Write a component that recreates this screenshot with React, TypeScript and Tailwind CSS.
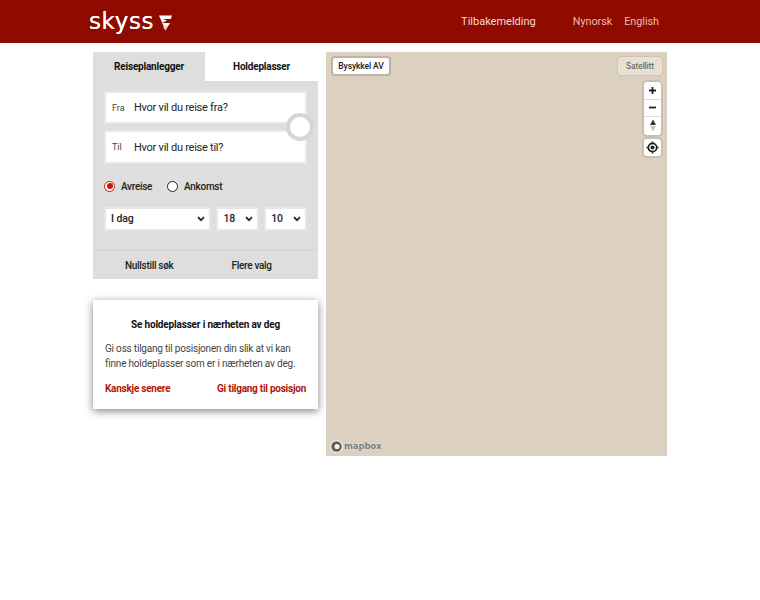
import React from "react";

function Chevron() {
  return (
    <svg width="8" height="6" viewBox="0 0 8 6" className="shrink-0">
      <path d="M1 1.2 L4 4.2 L7 1.2" fill="none" stroke="#222" strokeWidth="1.7" />
    </svg>
  );
}

function Select({ label, className }: { label: string; className: string }) {
  return (
    <div className={`flex h-[24px] items-center justify-between border-2 border-[#e6e6e6] bg-white pl-[5px] pr-[4px] text-[10.5px] font-medium tracking-[-0.1px] text-[#222] ${className}`}>
      <span>{label}</span>
      <Chevron />
    </div>
  );
}

function Field({ tag, text, className }: { tag: string; text: string; className: string }) {
  return (
    <div className={`flex items-center border-2 border-[#e8e8e8] bg-white pt-[2px] ${className}`}>
      <span className="w-[28px] pl-[6px] text-[9px] text-[#444]">{tag}</span>
      <span className="text-[11px] tracking-[-0.25px] text-[#222]">{text}</span>
    </div>
  );
}

export default function App() {
  return (
    <div className="min-h-[600px] bg-white font-['Roboto',sans-serif]">
      <header className="flex h-[43px] items-center bg-[#8f0b00] pl-[89px] pr-[101px]">
        <span className="font-['DejaVu_Sans',sans-serif] text-[23px] leading-none tracking-[0.6px] text-white [text-shadow:0_0_0.5px_#fff]">skyss</span>
        <svg width="13" height="16" viewBox="0 0 13 16" className="ml-[5px] mt-[3px]">
          <path d="M0 0.5 H13 L11.8 4 L4 4 L8 5.5 L3 8 L11 8 L6.5 15.5 Z" fill="#fff" />
          <path d="M4 12 L9 10.5 L6.5 15.5 Z" fill="#f0c9c4" />
        </svg>
        <span className="ml-auto mt-[1px] text-[11px] text-[#f6dcd8]">Tilbakemelding</span>
        <span className="ml-[37px] mt-[2px] text-[10.75px] text-[#eeb9b2]">Nynorsk</span>
        <span className="ml-[12px] mt-[2px] text-[10.75px] text-[#eeb9b2]">English</span>
      </header>

      <main className="ml-[93px] mt-[9px] flex w-[574px] items-start gap-[8px]">
        <div className="w-[225px] shrink-0">
          <div className="flex h-[29px] text-[10px] font-bold tracking-[-0.2px] text-[#111]">
            <div className="flex w-[112px] items-center justify-center bg-[#dedede]">Reiseplanlegger</div>
            <div className="flex flex-1 items-center justify-center bg-white">Holdeplasser</div>
          </div>
          <div className="bg-[#dedede]">
            <div className="relative flex flex-col gap-[6px] px-[11px] pt-[10px]">
              <Field tag="Fra" text="Hvor vil du reise fra?" className="h-[33px]" />
              <Field tag="Til" text="Hvor vil du reise til?" className="h-[34px]" />
              <div className="absolute left-[193px] top-[32px] flex h-[28px] w-[28px] items-center justify-center rounded-full bg-[#d6d6d6]">
                <div className="h-[20px] w-[20px] rounded-full bg-white" />
              </div>
            </div>
            <div className="flex h-[43px] items-center px-[11px] pt-[1px] text-[10px] font-medium tracking-[-0.3px] text-[#222]">
              <span className="flex h-[11px] w-[11px] items-center justify-center rounded-full border-[1.5px] border-[#b91c0c] bg-white">
                <span className="h-[6px] w-[6px] rounded-full bg-[#b91c0c]" />
              </span>
              <span className="ml-[6px]">Avreise</span>
              <span className="ml-[15px] h-[11px] w-[11px] rounded-full border-[1.5px] border-[#222] bg-white" />
              <span className="ml-[6px]">Ankomst</span>
            </div>
            <div className="flex gap-[5px] px-[11px]">
              <Select label="I dag" className="w-[108px]" />
              <Select label="18" className="w-[43px]" />
              <Select label="10" className="w-[43px]" />
            </div>
            <div className="mt-[18px] flex h-[30px] items-center border-t-2 border-[#d8d8d8] text-[10px] font-medium tracking-[-0.3px] text-[#222]">
              <span className="ml-[32px]">Nullstill søk</span>
              <span className="ml-[58px]">Flere valg</span>
            </div>
          </div>

          <div className="mt-[21px] h-[109px] bg-white px-[12px] pt-[18px] shadow-[0_2px_8px_rgba(0,0,0,0.5)]">
            <div className="text-center text-[10px] font-bold leading-[14px] tracking-[-0.17px] text-[#111]">Se holdeplasser i nærheten av deg</div>
            <p className="mt-[9px] text-[10px] leading-[15px] tracking-[-0.2px] text-[#444]">
              Gi oss tilgang til posisjonen din slik at vi kan finne holdeplasser som er i nærheten av deg.
            </p>
            <div className="mt-[11px] flex justify-between text-[10px] font-bold leading-[14px] tracking-[-0.25px] text-[#b01505]">
              <span>Kanskje senere</span>
              <span>Gi tilgang til posisjon</span>
            </div>
          </div>
        </div>

        <div className="relative h-[404px] flex-1 bg-[#dcd0c0]">
          <div className="absolute left-[7px] top-[6px] flex h-[16px] w-[56px] items-center justify-center rounded-[2px] bg-white text-[8.5px] font-medium tracking-[-0.1px] text-[#222] shadow-[0_0_0_2px_rgba(0,0,0,0.14)]">Bysykkel AV</div>
          <div className="absolute right-[5px] top-[5px] flex h-[18px] w-[44px] items-center justify-center rounded-[3px] bg-[#e8e0d4] text-[8.5px] tracking-[-0.1px] text-[#555] shadow-[0_0_0_1px_rgba(0,0,0,0.06)]">Satellitt</div>
          <div className="absolute right-[6px] top-[30px] flex w-[17px] flex-col divide-y divide-[#ddd] rounded-[3px] bg-white shadow-[0_0_0_2px_rgba(0,0,0,0.08)]">
            <div className="flex h-[17.5px] items-center justify-center">
              <svg width="9" height="9" viewBox="0 0 9 9"><path d="M4.5 1V8M1 4.5H8" stroke="#222" strokeWidth="1.8" /></svg>
            </div>
            <div className="flex h-[17.5px] items-center justify-center">
              <svg width="9" height="9" viewBox="0 0 9 9"><path d="M1 4.5H8" stroke="#222" strokeWidth="1.8" /></svg>
            </div>
            <div className="flex h-[17.5px] items-center justify-center">
              <svg width="8" height="13" viewBox="0 0 8 13">
                <path d="M4 0.5L7 6H1Z" fill="#333" />
                <path d="M4 12.5L7 7H1Z" fill="#c4c4c4" />
              </svg>
            </div>
          </div>
          <div className="absolute right-[6px] top-[87px] flex h-[17px] w-[17px] items-center justify-center rounded-[3px] bg-white shadow-[0_0_0_2px_rgba(0,0,0,0.08)]">
            <svg width="13" height="13" viewBox="0 0 13 13">
              <circle cx="6.5" cy="6.5" r="4.2" fill="none" stroke="#222" strokeWidth="1.7" />
              <circle cx="6.5" cy="6.5" r="2" fill="#222" />
              <path d="M6.5 0.5V2.5M6.5 10.5V12.5M0.5 6.5H2.5M10.5 6.5H12.5" stroke="#222" strokeWidth="1.4" />
            </svg>
          </div>
          <div className="absolute bottom-[3px] left-[4px] flex items-center gap-[1px]">
            <svg width="13" height="13" viewBox="0 0 13 13">
              <circle cx="6.5" cy="6.5" r="6.5" fill="#f4f0ea" />
              <circle cx="6.5" cy="6.5" r="5.2" fill="#5c5c5c" />
              <circle cx="7" cy="6.5" r="2.6" fill="#f4f0ea" />
            </svg>
            <span className="font-['DejaVu_Sans',sans-serif] text-[8.5px] font-bold leading-none tracking-[-0.1px] text-[#7a7a7a] [text-shadow:0_0_1px_#fff]">mapbox</span>
          </div>
        </div>
      </main>
    </div>
  );
}
